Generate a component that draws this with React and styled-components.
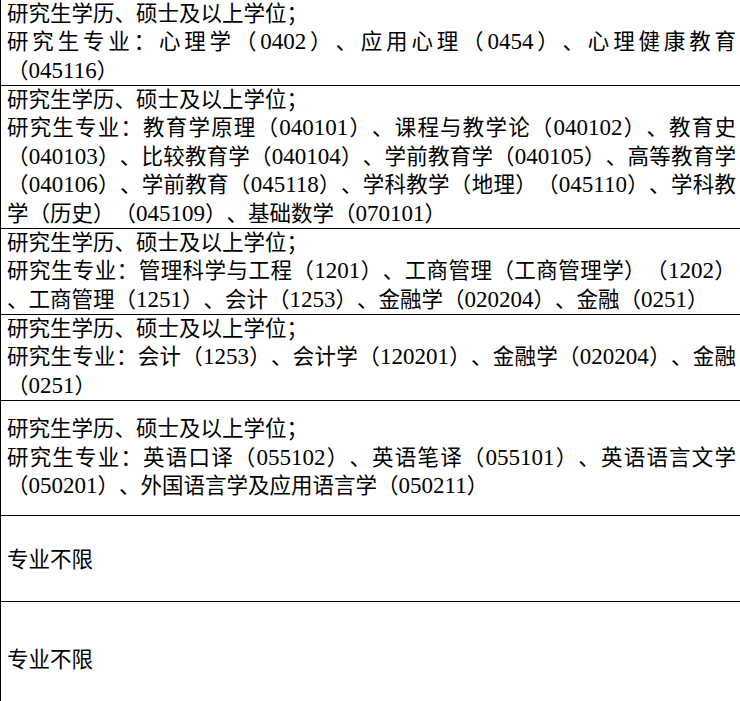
import React from "react";
import styled, { createGlobalStyle } from "styled-components";

const GlobalStyle = createGlobalStyle`
  html, body {
    margin: 0;
    padding: 0;
    overflow: hidden;
    background: #fff;
  }
`;

const LINE = 28.5;

const Table = styled.div`
  width: 740px;
  display: flex;
  flex-direction: column;
`;

const Row = styled.div`
  box-sizing: border-box;
  height: ${(p) => p.$lines * LINE + 0.5}px;
  border-left: 1.5px solid #000;
  border-bottom: 1.5px solid #000;
  padding: 0 4px 0 6px;
  display: flex;
  flex-direction: column;
  justify-content: center;
`;

const Line = styled.div`
  height: ${LINE}px;
  line-height: ${LINE}px;
  font-size: 21.5px;
  font-family: "Liberation Serif", "Noto Sans CJK SC", serif;
  color: #000;
  white-space: nowrap;
  text-spacing-trim: space-all;
  text-align: ${(p) => (p.$full ? "justify" : "left")};
  text-align-last: ${(p) => (p.$full ? "justify" : "auto")};
`;

const Num = styled.span`
  font-family: "Liberation Serif", serif;
  font-size: 23px;
  line-height: 1;
`;

const PlainLine = styled(Line)`
  font-family: "Noto Sans CJK SC", sans-serif;
`;

const DEGREE = "研究生学历、硕士及以上学位；";

const rows = [
  {
    lines: 3,
    paras: [
      [DEGREE],
      [
        "研究生专业：心理学（0402）、应用心理（0454）、心理健康教育",
        "（045116）",
      ],
    ],
  },
  {
    lines: 5,
    paras: [
      [DEGREE],
      [
        "研究生专业：教育学原理（040101）、课程与教学论（040102）、教育史",
        "（040103）、比较教育学（040104）、学前教育学（040105）、高等教育学",
        "（040106）、学前教育（045118）、学科教学（地理）（045110）、学科教",
        "学（历史）（045109）、基础数学（070101）",
      ],
    ],
  },
  {
    lines: 3,
    paras: [
      [DEGREE],
      [
        "研究生专业：管理科学与工程（1201）、工商管理（工商管理学）（1202）",
        "、工商管理（1251）、会计（1253）、金融学（020204）、金融（0251）",
      ],
    ],
  },
  {
    lines: 3,
    paras: [
      [DEGREE],
      [
        "研究生专业：会计（1253）、会计学（120201）、金融学（020204）、金融",
        "（0251）",
      ],
    ],
  },
  {
    lines: 4,
    paras: [
      [DEGREE],
      [
        "研究生专业：英语口译（055102）、英语笔译（055101）、英语语言文学",
        "（050201）、外国语言学及应用语言学（050211）",
      ],
    ],
  },
  { lines: 3, plain: "专业不限" },
  { lines: 4, plain: "专业不限" },
];

function withNumbers(text) {
  return text
    .split(/(\d+)/)
    .map((part, i) => (/^\d+$/.test(part) ? <Num key={i}>{part}</Num> : part));
}

export default function App() {
  return (
    <>
      <GlobalStyle />
      <Table>
        {rows.map((row, i) => (
          <Row key={i} $lines={row.lines}>
            {row.plain ? (
              <PlainLine>{row.plain}</PlainLine>
            ) : (
              row.paras.map((para, j) =>
                para.map((text, k) => (
                  <Line key={`${j}-${k}`} $full={k < para.length - 1}>
                    {withNumbers(text)}
                  </Line>
                ))
              )
            )}
          </Row>
        ))}
      </Table>
    </>
  );
}
